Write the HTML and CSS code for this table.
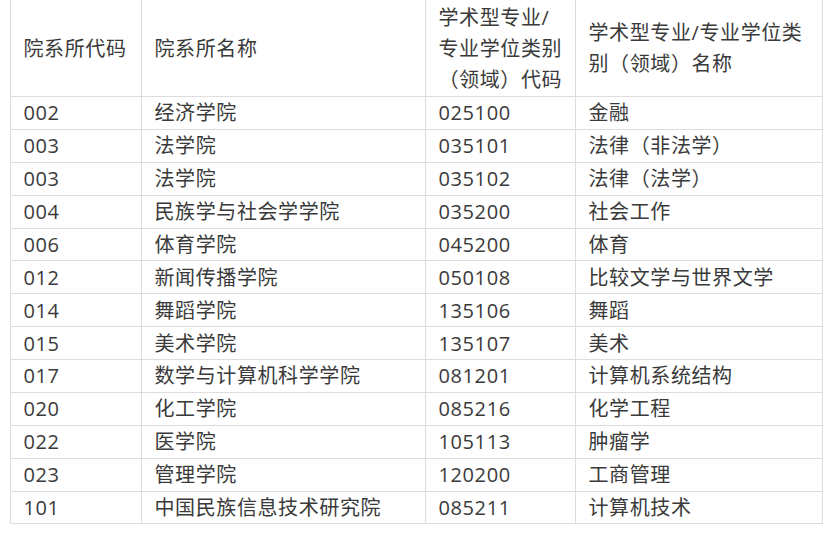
FILE: index.html
```html
<!DOCTYPE html>
<html lang="zh-CN">
<head>
<meta charset="utf-8">
<link rel="stylesheet" href="styles.css">
</head>
<body>
<div class="wrap">
<table class="grid">
<colgroup>
<col class="c1"><col class="c2"><col class="c3"><col class="c4">
</colgroup>
<thead>
<tr>
<th>院系所代码</th>
<th>院系所名称</th>
<th>学术型专业/专业学位类别（领域）代码</th>
<th>学术型专业/专业学位类别（领域）名称</th>
</tr>
</thead>
<tbody>
<tr><td>002</td><td>经济学院</td><td>025100</td><td>金融</td></tr>
<tr><td>003</td><td>法学院</td><td>035101</td><td>法律（非法学）</td></tr>
<tr><td>003</td><td>法学院</td><td>035102</td><td>法律（法学）</td></tr>
<tr><td>004</td><td>民族学与社会学学院</td><td>035200</td><td>社会工作</td></tr>
<tr><td>006</td><td>体育学院</td><td>045200</td><td>体育</td></tr>
<tr><td>012</td><td>新闻传播学院</td><td>050108</td><td>比较文学与世界文学</td></tr>
<tr><td>014</td><td>舞蹈学院</td><td>135106</td><td>舞蹈</td></tr>
<tr><td>015</td><td>美术学院</td><td>135107</td><td>美术</td></tr>
<tr><td>017</td><td>数学与计算机科学学院</td><td>081201</td><td>计算机系统结构</td></tr>
<tr><td>020</td><td>化工学院</td><td>085216</td><td>化学工程</td></tr>
<tr><td>022</td><td>医学院</td><td>105113</td><td>肿瘤学</td></tr>
<tr><td>023</td><td>管理学院</td><td>120200</td><td>工商管理</td></tr>
<tr><td>101</td><td>中国民族信息技术研究院</td><td>085211</td><td>计算机技术</td></tr>
</tbody>
</table>
</div>
</body>
</html>
```

FILE: styles.css
```css
html, body {
  margin: 0;
  padding: 0;
  background: #ffffff;
}

.wrap {
  padding-left: 10px;
  margin-top: -1px;
}

.grid {
  border-collapse: collapse;
  table-layout: fixed;
  width: 812px;
  font-family: "Open Sans", "Noto Sans CJK SC", "Microsoft YaHei", sans-serif;
  font-size: 20px;
  letter-spacing: 0.6px;
  line-height: 31px;
  color: #3a3a3a;
}

.c1 { width: 131px; }
.c2 { width: 284px; }
.c3 { width: 150px; }
.c4 { width: 247px; }

.grid th,
.grid td {
  border: 1px solid #dddddd;
  padding: 0.45px 11px 0.45px 12.5px;
  text-align: left;
  vertical-align: middle;
  font-weight: normal;
}

.grid th {
  padding-top: 1.5px;
  padding-bottom: 1.5px;
}
```
